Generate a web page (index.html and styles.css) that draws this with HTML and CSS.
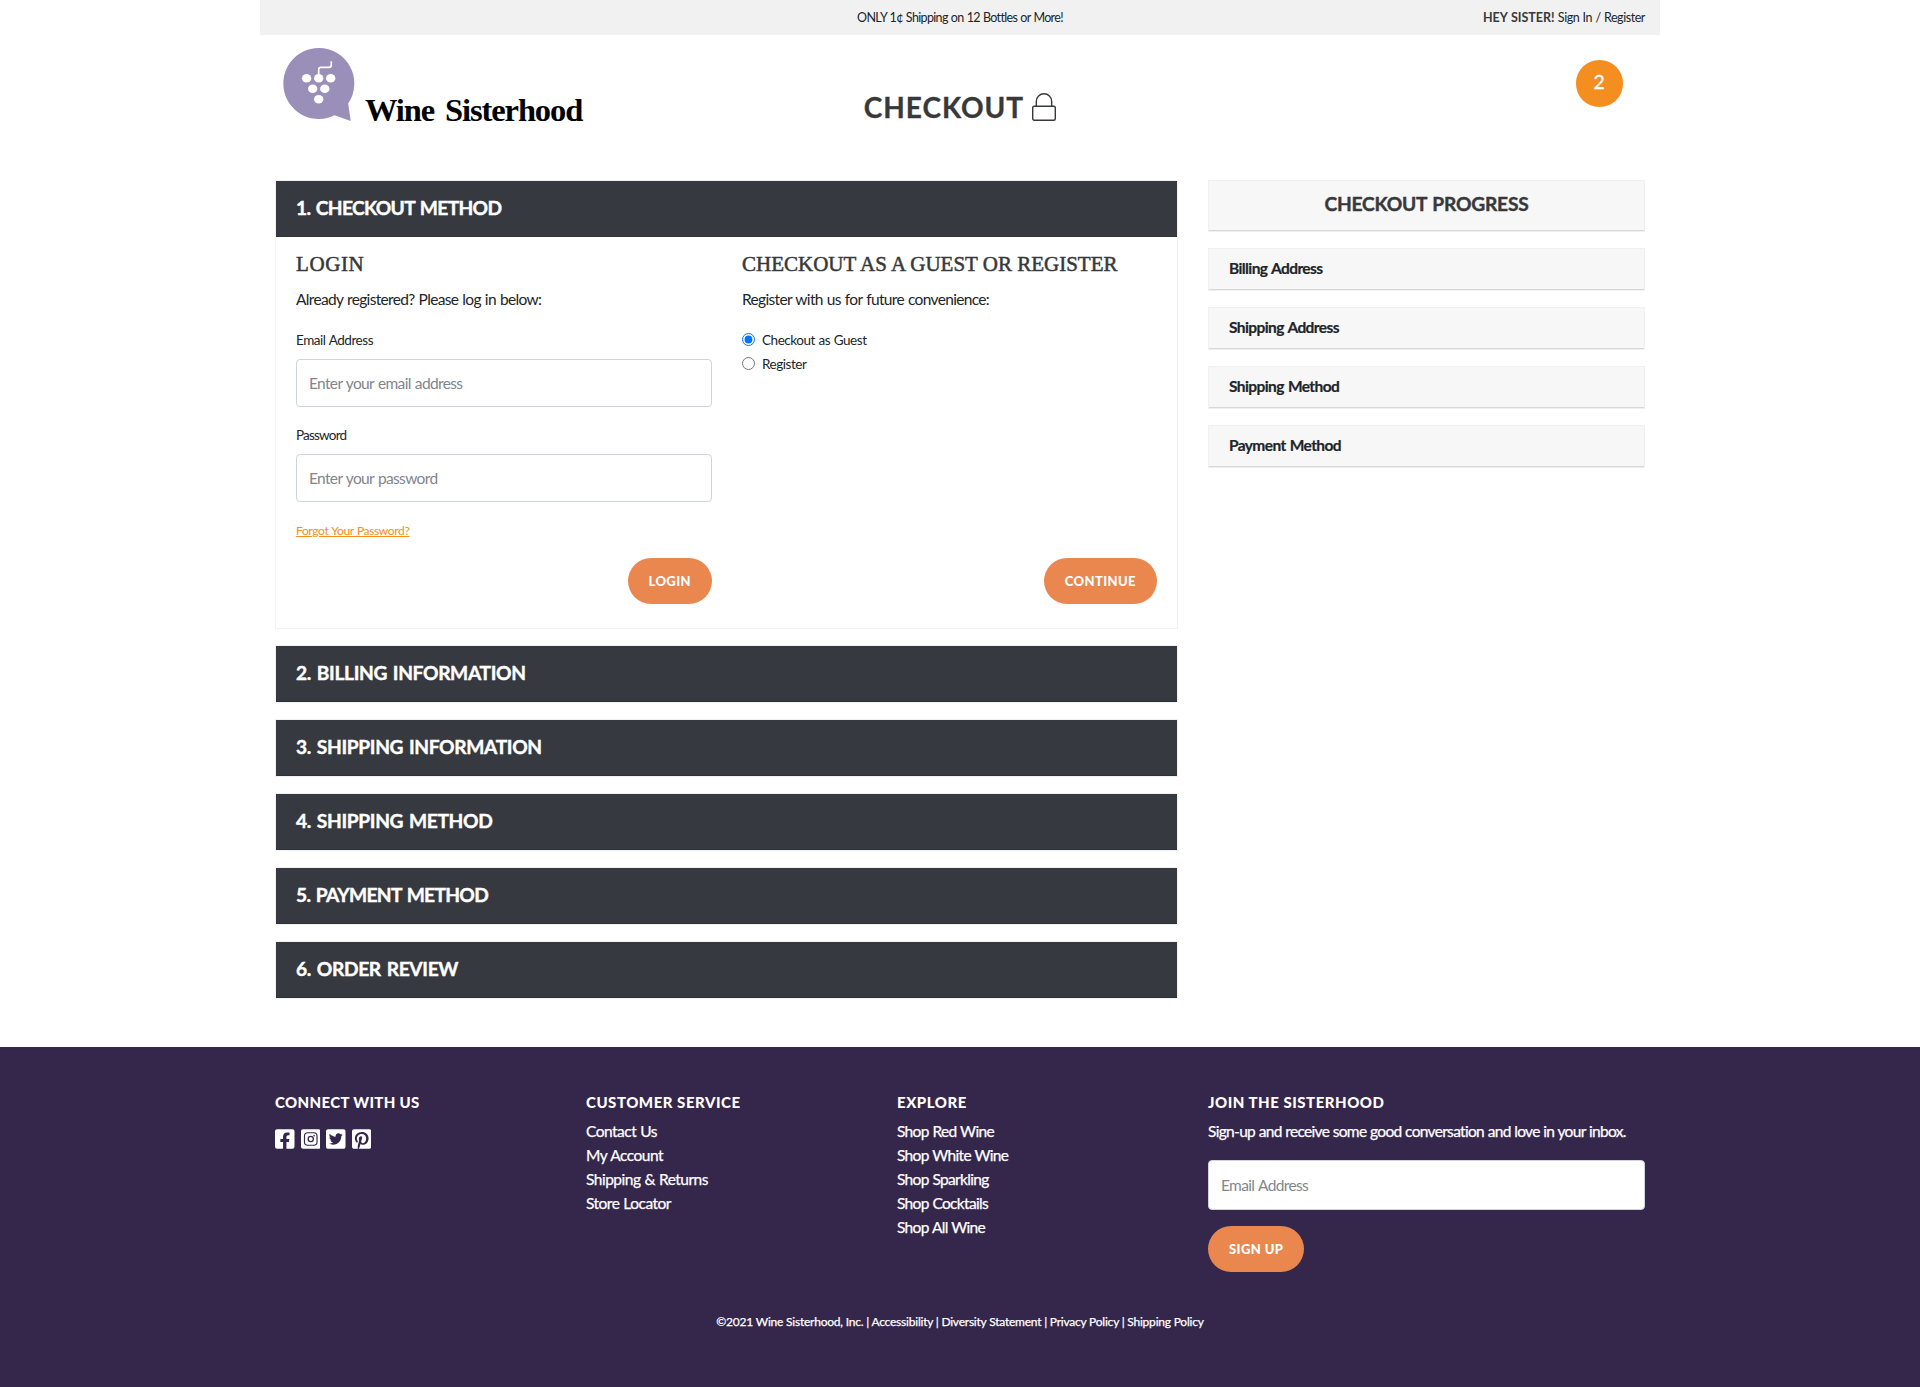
FILE: index.html
```html
<!DOCTYPE html>
<html lang="en">
<head>
<meta charset="utf-8">
<title>Checkout</title>
<link rel="stylesheet" href="styles.css">
</head>
<body>
<div class="container">
  <div class="topbar">
    <span class="promo">ONLY 1¢ Shipping on 12 Bottles or More!</span>
    <span class="account"><b>HEY SISTER!</b> Sign In / Register</span>
  </div>
  <header class="header">
    <div class="logo">
      <svg class="logo-mark" width="72" height="75" viewBox="0 0 72 75">
        <path d="M35.700 0a35.500 35.500 0 0 1 29.500 55.400L67.700 73 51.600 67.300A35.500 35.500 0 1 1 35.700 0z" fill="#998fb8"/>
        <path d="M35.700 30V21.500q0-2.200 2.200-2.200H46q2.300 0 2.300-2.300v-3.800" fill="none" stroke="#fff" stroke-width="1.700"/>
        <g fill="#fff"><ellipse cx="23.600" cy="30.200" rx="4.700" ry="4.300"/><ellipse cx="35.700" cy="30.200" rx="4.700" ry="4.300"/><ellipse cx="47.700" cy="30.200" rx="4.700" ry="4.300"/><ellipse cx="29.700" cy="40.700" rx="4.700" ry="4.300"/><ellipse cx="41.800" cy="40.700" rx="4.700" ry="4.300"/><ellipse cx="35.700" cy="51.300" rx="4.700" ry="4.300"/></g>
      </svg>
      <span class="logo-text">Wine Sisterhood</span>
    </div>
    <h1 class="title">CHECKOUT
      <svg width="24" height="28" viewBox="0 0 24 28" fill="none" stroke="#37393b" stroke-width="1.400"><rect x=".7" y="13.200" width="22.600" height="14" rx="1.500"/><path d="M4.300 13V8.500a7.700 7.700 0 0 1 15.400 0V13"/></svg>
    </h1>
    <div class="cart"><span class="badge">2</span></div>
  </header>

  <div class="columns">
    <main class="steps">
      <section class="step">
        <h2 class="tight">1. CHECKOUT METHOD</h2>
        <div class="step-body">
          <form class="pane">
            <h3 class="login-title">LOGIN</h3>
            <p>Already registered? Please log in below:</p>
            <label for="email">Email Address</label>
            <input class="field" id="email" type="text" placeholder="Enter your email address">
            <label for="pass" class="pass-label">Password</label>
            <input class="field" id="pass" type="password" placeholder="Enter your password">
            <a class="forgot" href="#">Forgot Your Password?</a>
            <button type="button" class="btn">LOGIN</button>
          </form>
          <form class="pane">
            <h3>CHECKOUT AS A GUEST OR REGISTER</h3>
            <p>Register with us for future convenience:</p>
            <label class="radio"><input type="radio" name="method" checked>Checkout as Guest</label>
            <label class="radio"><input type="radio" name="method">Register</label>
            <button type="button" class="btn">CONTINUE</button>
          </form>
        </div>
      </section>
      <section class="step"><h2>2. BILLING INFORMATION</h2></section>
      <section class="step"><h2>3. SHIPPING INFORMATION</h2></section>
      <section class="step"><h2>4. SHIPPING METHOD</h2></section>
      <section class="step"><h2 class="tight">5. PAYMENT METHOD</h2></section>
      <section class="step"><h2>6. ORDER REVIEW</h2></section>
    </main>
    <aside class="progress">
      <div class="card card-title"><h2>CHECKOUT PROGRESS</h2></div>
      <div class="card"><h4>Billing Address</h4></div>
      <div class="card"><h4>Shipping Address</h4></div>
      <div class="card"><h4>Shipping Method</h4></div>
      <div class="card"><h4>Payment Method</h4></div>
    </aside>
  </div>
</div>

<footer class="footer">
  <div class="footer-grid">
    <div>
      <h5>CONNECT WITH US</h5>
      <div class="social">
        <svg viewBox="0 32 448 448"><path d="M400 32H48A48 48 0 0 0 0 80v352a48 48 0 0 0 48 48h137.250V327.690h-63V256h63v-54.640c0-62.150 37-96.480 93.670-96.480 27.140 0 55.520 4.840 55.520 4.840v61h-31.270c-30.810 0-40.420 19.120-40.420 38.730V256h68.780l-11 71.690h-57.780V480H400a48 48 0 0 0 48-48V80a48 48 0 0 0-48-48z"/></svg>
        <svg viewBox="0 32 448 448"><path d="M48 32H400a48 48 0 0 1 48 48V432a48 48 0 0 1-48 48H48a48 48 0 0 1-48-48V80a48 48 0 0 1 48-48z"/><rect x="80" y="112" width="288" height="288" rx="74" fill="none" stroke="#35264b" stroke-width="27"/><circle cx="224" cy="256" r="60" fill="none" stroke="#35264b" stroke-width="29"/><circle cx="301" cy="179" r="18" fill="#35264b"/></svg>
        <svg viewBox="0 32 448 448"><path d="M400 32H48C21.500 32 0 53.500 0 80v352c0 26.500 21.500 48 48 48h352c26.500 0 48-21.500 48-48V80c0-26.500-21.500-48-48-48zm-48.900 158.800c.2 2.800.2 5.700.2 8.500 0 86.700-66 186.600-186.600 186.600-37.200 0-71.700-10.800-100.700-29.400 5.300.6 10.400.8 15.800.8 30.700 0 58.900-10.400 81.400-28-28.800-.6-53-19.500-61.300-45.500 10.100 1.500 19.200 1.500 29.600-1.200-30-6.100-52.500-32.500-52.500-64.400v-.8c8.700 4.900 18.900 7.900 29.600 8.300a65.447 65.447 0 0 1-29.200-54.600c0-12.200 3.200-23.400 8.900-33.100 32.300 39.800 80.800 65.800 135.200 68.600-9.300-44.500 24-80.600 64-80.600 18.900 0 35.900 7.900 47.900 20.700 14.800-2.800 29-8.300 41.600-15.800-4.900 15.200-15.200 28-28.800 36.100 13.200-1.400 26-5.100 37.800-10.200-8.900 13.100-20.100 24.700-32.900 34z"/></svg>
        <svg viewBox="0 32 448 448"><path d="M448 80v352c0 26.500-21.500 48-48 48H154.400c9.800-16.400 22.400-40 27.400-59.300 3-11.500 15.300-58.400 15.300-58.400 8 15.300 31.400 28.200 56.300 28.200 74.100 0 127.400-68.100 127.400-152.700 0-81.100-66.200-141.800-151.400-141.800-106 0-162.200 71.100-162.200 148.600 0 36 19.200 80.800 49.800 95.100 4.700 2.200 7.100 1.200 8.200-3.300.8-3.400 5-20.100 6.800-27.800.6-2.500.3-4.600-1.700-7-10.100-12.300-18.300-34.900-18.300-56 0-54.200 41-106.600 110.900-106.600 60.300 0 102.600 41.100 102.600 99.900 0 66.400-33.500 112.400-77.200 112.400-24.100 0-42.100-19.900-36.400-44.400 6.900-29.200 20.300-60.700 20.300-81.800 0-53-75.500-45.700-75.500 25 0 21.700 7.300 36.500 7.300 36.500-31.400 132.800-36.100 134.500-29.600 192.600l2.200.8H48c-26.500 0-48-21.500-48-48V80c0-26.500 21.500-48 48-48h352c26.500 0 48 21.500 48 48z"/></svg>
      </div>
    </div>
    <div>
      <h5 class="wide">CUSTOMER SERVICE</h5>
      <ul>
        <li>Contact Us</li>
        <li>My Account</li>
        <li>Shipping &amp; Returns</li>
        <li>Store Locator</li>
      </ul>
    </div>
    <div>
      <h5 class="wide">EXPLORE</h5>
      <ul class="explore">
        <li>Shop Red Wine</li>
        <li>Shop White Wine</li>
        <li>Shop Sparkling</li>
        <li>Shop Cocktails</li>
        <li>Shop All Wine</li>
      </ul>
    </div>
    <form>
      <h5 class="wide">JOIN THE SISTERHOOD</h5>
      <div class="invite">Sign-up and receive some good conversation and love in your inbox.</div>
      <input class="field" type="text" placeholder="Email Address">
      <button type="button" class="btn">SIGN UP</button>
    </form>
  </div>
  <div class="legal">©2021 Wine Sisterhood, Inc. | Accessibility | Diversity Statement | Privacy Policy | Shipping Policy</div>
</footer>
</body>
</html>
```
FILE: styles.css
```css
* { box-sizing: border-box; }
body {
  margin: 0;
  background: #fff;
  color: #212529;
  font: 400 15.500px/24px Lato, sans-serif;
  letter-spacing: -.6px;
}
h1, h2, h3, h4, h5, p, ul { margin: 0; padding: 0; }
ul { list-style: none; }

.container { width: 1400px; margin: 0 auto; }
.topbar {
  display: grid;
  grid-template-columns: 1fr auto 1fr;
  height: 35px;
  padding: 0 15px;
  background: #f1f1f1;
  font-size: 12.500px;
  line-height: 36px;
  letter-spacing: -.65px;
  word-spacing: .5px;
}
.promo { grid-column: 2; }
.account { text-align: right; letter-spacing: -.43px; }
.account b { color: #37393b; letter-spacing: 0; }

.header {
  display: grid;
  grid-template-columns: 1fr auto 1fr;
  align-items: start;
  height: 145px;
  padding: 0 15px;
}
.logo { display: flex; padding: 13px 0 0 8px; }
.logo-text {
  margin: 42px 0 0 10px;
  font: 700 32.500px/40px "Liberation Serif", serif;
  color: #000;
  letter-spacing: -1.100px;
  word-spacing: 4px;
}
.title {
  display: flex;
  gap: 8px;
  padding-top: 52px;
  font: 700 28px/40px Lato, sans-serif;
  letter-spacing: .95px;
  color: #37393b;
  -webkit-text-stroke: .3px #37393b;
}
.title svg { margin-top: 6px; }
.cart { display: flex; justify-content: flex-end; padding: 25px 22.500px 0 0; }
.badge {
  width: 46.500px;
  height: 46.500px;
  border-radius: 50%;
  background: #f48e21;
  color: #fff;
  font-size: 19.500px;
  line-height: 44px;
  letter-spacing: 0;
  text-align: center;
  -webkit-text-stroke: .3px #fff;
}

.columns { display: grid; grid-template-columns: 903px 437px; gap: 30px; padding: 0 15px 48px; }
.steps { display: flex; flex-direction: column; gap: 16px; }
.step { border: 1px solid #f0f1f2; }
.step h2 {
  height: 56px;
  padding-left: 20px;
  border-bottom: 1px solid #2f3139;
  background: #363940;
  color: #fff;
  font: 700 19.200px/54px Lato, sans-serif;
  letter-spacing: -.35px;
  word-spacing: 1.500px;
  -webkit-text-stroke: .4px #fff;
}
.step h2.tight { letter-spacing: -.68px; }
.step-body { display: grid; grid-template-columns: 416px 415px; gap: 30px; padding: 15px 20px 24px; }
.pane { display: flex; flex-direction: column; }
.pane h3 {
  font: 400 21px/24px "Liberation Serif", serif;
  letter-spacing: 0;
  color: #37393b;
  -webkit-text-stroke: .5px #37393b;
}
.pane .login-title { letter-spacing: .6px; }
.pane p { margin: 11px 0 17px; letter-spacing: -.66px; word-spacing: .7px; }
.pane label { font-size: 13.500px; letter-spacing: -.46px; word-spacing: .6px; }
.pane .pass-label { margin-top: 16px; letter-spacing: -.8px; }
.field {
  width: 100%;
  height: 48px;
  margin: 7px 0 0;
  padding: 0 12px;
  border: 1px solid #ced4da;
  border-radius: 4px;
  background: #fff;
  font: inherit;
  letter-spacing: -.64px;
  word-spacing: .8px;
}
.field::placeholder { color: #7f868d; opacity: 1; }
.forgot {
  align-self: flex-start;
  margin: 17px 0 15px;
  color: #f48e21;
  font-size: 12px;
  letter-spacing: -.35px;
  word-spacing: .6px;
  text-decoration: underline;
}
.radio { display: flex; align-items: flex-start; }
.radio input { width: 13px; height: 13px; margin: 5px 7px 0 0; accent-color: #0075ff; }
.btn {
  align-self: flex-end;
  height: 46px;
  margin-top: auto;
  padding: 0 21px 1px;
  border: 0;
  border-radius: 23px;
  background: #e9874e;
  color: #fff;
  font: 900 13px/24px Lato, sans-serif;
  letter-spacing: .4px;
}

.progress { display: flex; flex-direction: column; gap: 16px; }
.card { height: 43px; border: 1px solid #f0f0f0; background: #f7f7f7; }
.card h4 { height: 41px; padding-left: 20px; border-bottom: 1px solid #d6d7d8; font-size: 15.500px; font-weight: 700; line-height: 39px; word-spacing: 1px; -webkit-text-stroke: .2px #212529; }
.card-title { height: 52px; }
.card-title h2 {
  height: 50px;
  border-bottom: 1px solid #d6d7d8;
  color: #37393b;
  font: 700 19.200px/46px Lato, sans-serif;
  letter-spacing: -.2px;
  word-spacing: 1px;
  text-align: center;
  -webkit-text-stroke: .4px #37393b;
}

.footer { height: 340px; padding-top: 43px; background: #35264b; color: #fff; }
.footer-grid { display: grid; grid-template-columns: 311px 311px 311px 437px; width: 1370px; height: 219px; margin: 0 auto; }
.footer h5 { margin-bottom: 5px; font: 900 15px/25px Lato, sans-serif; height: 24px; letter-spacing: .35px; }
.footer h5.wide { letter-spacing: .52px; }
.footer ul { letter-spacing: -.5px; word-spacing: .5px; }
.footer .explore { letter-spacing: -.68px; }
.footer ul, .invite, .legal { -webkit-text-stroke: .25px #fff; }
.invite { letter-spacing: -.68px; word-spacing: .3px; }
.social { display: flex; gap: 6px; padding-top: 10px; }
.social svg { width: 19.500px; height: 20px; fill: #fff; }
.footer .field { height: 50px; margin-top: 17px; }
.footer .btn { display: block; margin-top: 16px; }
.legal { text-align: center; padding-top: 1px; font-size: 12px; letter-spacing: -.22px; }
```
